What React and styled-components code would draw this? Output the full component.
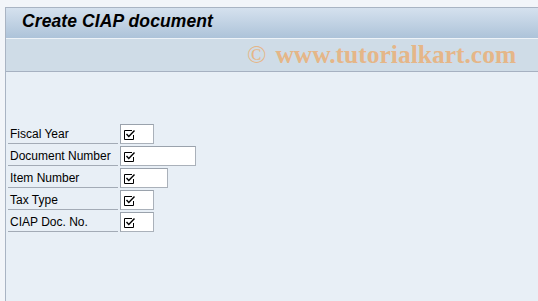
import React from 'react';
import styled, { createGlobalStyle } from 'styled-components';

const Global = createGlobalStyle`
  html, body {
    margin: 0;
    padding: 0;
    background: #f2f5f9;
  }
  #root {
    height: 301px;
    overflow: hidden;
  }
`;

const Frame = styled.div`
  margin: 7px 0 0 5px;
  height: 294px;
  display: flex;
  flex-direction: column;
  border-left: 1px solid #a9b4c3;
  border-top: 1px solid #a9b4c3;
  box-sizing: border-box;
`;

const TitleBar = styled.div`
  height: 30px;
  flex: none;
  background: linear-gradient(to bottom, #d5e1ee, #adc3d9);
  display: flex;
  align-items: center;
  padding: 0 0 3px 16px;
  box-sizing: border-box;
`;

const Title = styled.h1`
  margin: 0;
  font-family: "Liberation Sans", Arial, sans-serif;
  font-size: 17.5px;
  font-weight: bold;
  font-style: italic;
  color: #000;
  letter-spacing: 0.1px;
`;

const Toolbar = styled.div`
  height: 34px;
  flex: none;
  box-sizing: border-box;
  background: #cfdce7;
  border-top: 1px solid #eef3f8;
  border-bottom: 1px solid #a6b1c1;
  display: flex;
  align-items: center;
  padding: 0 0 1px 241px;
`;

const Watermark = styled.span`
  font-family: "Liberation Serif", "Times New Roman", serif;
  font-size: 25.5px;
  font-weight: bold;
  color: #e5b688;
  white-space: nowrap;
`;

const Copy = styled.span`
  font-weight: normal;
  margin-right: 9px;
`;

const Body = styled.div`
  flex: 1;
  background: #e8eff6;
  padding: 52px 0 0 2px;
`;

const Form = styled.div`
  display: flex;
  flex-direction: column;
  gap: 2px;
`;

const Row = styled.div`
  display: flex;
  align-items: flex-start;
  height: 20px;
`;

const Label = styled.div`
  width: 110px;
  height: 20px;
  box-sizing: border-box;
  padding: 3px 0 0 2px;
  border-bottom: 1px solid #a3abb6;
  font-family: "Liberation Sans", Arial, sans-serif;
  font-size: 12px;
  color: #000;
  white-space: nowrap;
`;

const Field = styled.div`
  margin-left: 2px;
  width: ${p => p.w}px;
  height: 20px;
  box-sizing: border-box;
  background: #fff;
  border: 1px solid #aab1ba;
  border-top-color: #9aa2ac;
  border-left-color: #9aa2ac;
  display: flex;
  align-items: center;
  padding: 1px 0 0 3px;
`;

const CheckIcon = () => (
  <svg width="12" height="11" viewBox="0 0 12 11">
    <path d="M0.5 1.5 H8 M0.5 1.5 V10.5 H9.5 V6" fill="none" stroke="#000" strokeWidth="1" />
    <path d="M2.5 5 L4.8 7.5 L10.5 1.5" fill="none" stroke="#000" strokeWidth="1.4" />
  </svg>
);

const fields = [
  { label: 'Fiscal Year', w: 34 },
  { label: 'Document Number', w: 76 },
  { label: 'Item Number', w: 48 },
  { label: 'Tax Type', w: 34 },
  { label: 'CIAP Doc. No.', w: 34 },
];

export default function App() {
  return (
    <>
      <Global />
      <Frame>
        <TitleBar>
          <Title>Create CIAP document</Title>
        </TitleBar>
        <Toolbar>
          <Watermark><Copy>©</Copy>www.tutorialkart.com</Watermark>
        </Toolbar>
        <Body>
          <Form>
            {fields.map(f => (
              <Row key={f.label}>
                <Label>{f.label}</Label>
                <Field w={f.w}><CheckIcon /></Field>
              </Row>
            ))}
          </Form>
        </Body>
      </Frame>
    </>
  );
}
